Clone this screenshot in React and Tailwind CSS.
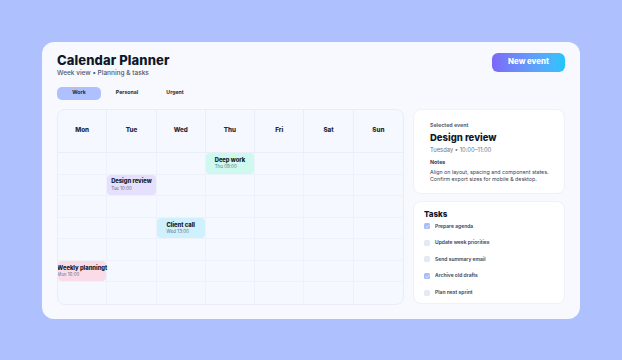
import React, { useState } from 'react';

const days = ['Mon', 'Tue', 'Wed', 'Thu', 'Fri', 'Sat', 'Sun'];

// row index (0-based, below header) -> day index -> event
const events = [
    { title: 'Deep work', time: 'Thu 09:00', row: 0, day: 3, color: 'bg-[#cdf9ee]' },
    { title: 'Design review', time: 'Tue 10:00', row: 1, day: 1, color: 'bg-[#e4e0fd]' },
    { title: 'Client call', time: 'Wed 13:00', row: 3, day: 2, color: 'bg-[#cff0fd]' },
    { title: 'Weekly planningt', time: 'Mon 16:00', row: 5, day: 0, color: 'bg-[#fadce8]' },
];

const tasks = [
    { label: 'Prepare agenda', done: true },
    { label: 'Update week priorities', done: false },
    { label: 'Send summary email', done: false },
    { label: 'Archive old drafts', done: true },
    { label: 'Plan next sprint', done: false },
];

const Check = ({ done }) => (
    <span className={`w-[6px] h-[6px] rounded-[1.5px] flex items-center justify-center ${done ? 'bg-[#a9bbfb]' : 'bg-[#e4e9f8]'}`}>
        {done && (
            <svg viewBox="0 0 10 10" className="w-[5px] h-[5px]">
                <path d="M2 5.2 L4.2 7.2 L8 2.8" fill="none" stroke="#eef2ff" strokeWidth="1.6" strokeLinecap="round" strokeLinejoin="round" />
            </svg>
        )}
    </span>
);

const EventCell = ({ ev }) => (
    <div className={`w-full h-full rounded-[4px] flex items-center justify-center ${ev.color}`}>
        <div className="text-left leading-none whitespace-nowrap">
            <div className="text-[5.8px] font-extrabold text-[#111827]">{ev.title}</div>
            <div className="text-[4.5px] text-[#6b7280] mt-[2.5px]">{ev.time}</div>
        </div>
    </div>
);

const App = () => {
    const [tab, setTab] = useState('Work');

    return (
        <div className="w-[622px] h-[360px] bg-[#aec0fd] flex items-center justify-center" style={{ fontFamily: 'Inter, "Noto Sans", sans-serif' }}>
            <div className="w-[538px] h-[277px] bg-[#f7f9fe] rounded-[12px] px-[15px] pt-[10px] pb-[13px] flex flex-col">
                <div className="flex justify-between items-start">
                    <div>
                        <h1 className="text-[13px] leading-[17px] font-extrabold text-[#0f172a] tracking-[0.1px]">Calendar Planner</h1>
                        <p className="text-[6.5px] leading-[8px] font-medium text-[#4b5567]">Week view • Planning &amp; tasks</p>
                    </div>
                    <button className="mt-[1px] w-[73px] h-[19px] rounded-[6px] bg-gradient-to-r from-[#7a68f7] to-[#1ec6fb] text-white text-[7.8px] font-extrabold">
                        New event
                    </button>
                </div>

                <div className="flex gap-[4px] mt-[10px]">
                    {['Work', 'Personal', 'Urgent'].map(t => (
                        <button
                            key={t}
                            onClick={() => setTab(t)}
                            className={`w-[44px] h-[13.5px] rounded-[5px] text-[5.2px] font-bold text-[#1f2937] ${tab === t ? 'bg-[#aec0fd]' : ''}`}
                        >
                            {t}
                        </button>
                    ))}
                </div>

                <div className="flex gap-[9px] mt-[9px] flex-1">
                    <div className="w-[347px] h-[196px] rounded-[8px] border border-[#e8edf8] bg-[#f5f8fe] overflow-hidden grid grid-cols-7 grid-rows-[43px_repeat(7,1fr)]">
                        {days.map((d, i) => (
                            <div key={d} className={`flex items-center justify-center text-[6.3px] font-extrabold text-[#1f2937] border-b border-[#e9eef8] ${i < 6 ? 'border-r' : ''}`}>
                                {d}
                            </div>
                        ))}
                        {Array.from({ length: 7 }).map((_, r) =>
                            days.map((d, c) => {
                                const ev = events.find(e => e.row === r && e.day === c);
                                return (
                                    <div key={`${r}-${c}`} className={`border-[#edf1f9] ${c < 6 ? 'border-r' : ''} ${r < 6 ? 'border-b' : ''}`}>
                                        {ev && <EventCell ev={ev} />}
                                    </div>
                                );
                            })
                        )}
                    </div>

                    <div className="flex-1 flex flex-col gap-[7px]">
                        <div className="h-[85px] bg-white rounded-[8px] border border-[#eef1f8] pl-[16px] pt-[13px]">
                            <div className="text-[5.3px] font-bold text-[#5b6478] leading-none">Selected event</div>
                            <div className="text-[9.5px] font-extrabold text-[#0f172a] leading-none mt-[5px]">Design review</div>
                            <div className="text-[5.8px] text-[#6b7388] leading-none mt-[4px]">Tuesday • 10:00–11:00</div>
                            <div className="text-[5.3px] font-bold text-[#374151] leading-none mt-[7px]">Notes</div>
                            <div className="text-[5.3px] text-[#374151] leading-[7px] mt-[4px]">
                                Align on layout, spacing and component states.<br />
                                Confirm export sizes for mobile &amp; desktop.
                            </div>
                        </div>
                        <div className="h-[103px] bg-white rounded-[8px] border border-[#eef1f8] pl-[10px] pt-[8px]">
                            <div className="text-[8px] font-extrabold text-[#0f172a] leading-none">Tasks</div>
                            <div className="flex flex-col">
                                {tasks.map(t => (
                                    <div key={t.label} className="h-[16.6px] flex items-center gap-[5px]">
                                        <Check done={t.done} />
                                        <span className="text-[5px] font-semibold text-[#374151]">{t.label}</span>
                                    </div>
                                ))}
                            </div>
                        </div>
                    </div>
                </div>
            </div>
        </div>
    );
};

export default App;
